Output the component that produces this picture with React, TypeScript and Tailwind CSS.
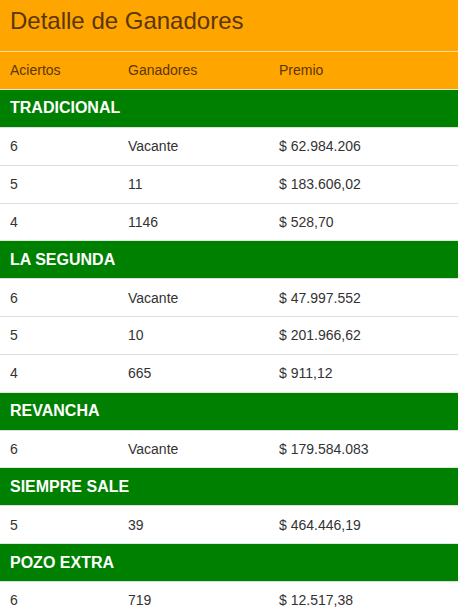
import React from "react";

type Row = [string, string, string];
const sections: { name: string; rows: Row[] }[] = [
  { name: "TRADICIONAL", rows: [["6", "Vacante", "$ 62.984.206"], ["5", "11", "$ 183.606,02"], ["4", "1146", "$ 528,70"]] },
  { name: "LA SEGUNDA", rows: [["6", "Vacante", "$ 47.997.552"], ["5", "10", "$ 201.966,62"], ["4", "665", "$ 911,12"]] },
  { name: "REVANCHA", rows: [["6", "Vacante", "$ 179.584.083"]] },
  { name: "SIEMPRE SALE", rows: [["5", "39", "$ 464.446,19"]] },
  { name: "POZO EXTRA", rows: [["6", "719", "$ 12.517,38"]] },
];

export default function App() {
  return (
    <div className="w-[458px] h-[614px] overflow-hidden bg-white" style={{ fontFamily: '"Liberation Sans", Arial, sans-serif' }}>
      <div className="h-[51px] bg-[#FFA500] pl-[10px] pt-[8px] text-[24px] leading-[1.1] text-[#5a3608]">
        Detalle de Ganadores
      </div>
      <div className="h-[38px] bg-[#FFA500] border-t border-[#f7dca6] grid grid-cols-[118px_151px_1fr] pl-[10px] items-center text-[14px] text-[#5a3608]">
        <div>Aciertos</div>
        <div>Ganadores</div>
        <div>Premio</div>
      </div>
      {sections.map((s) => (
        <div key={s.name}>
          <div className="h-[37.85px] bg-[#008000] border-t border-[#d9ecd9] pl-[10px] flex items-center text-[16px] font-bold text-white">
            {s.name}
          </div>
          {s.rows.map((r, i) => (
            <div key={i} className="h-[37.85px] border-t border-[#dddddd] grid grid-cols-[118px_151px_1fr] pl-[10px] pt-[1px] items-center text-[14px] text-[#333333]">
              <div>{r[0]}</div>
              <div>{r[1]}</div>
              <div>{r[2]}</div>
            </div>
          ))}
        </div>
      ))}
    </div>
  );
}
